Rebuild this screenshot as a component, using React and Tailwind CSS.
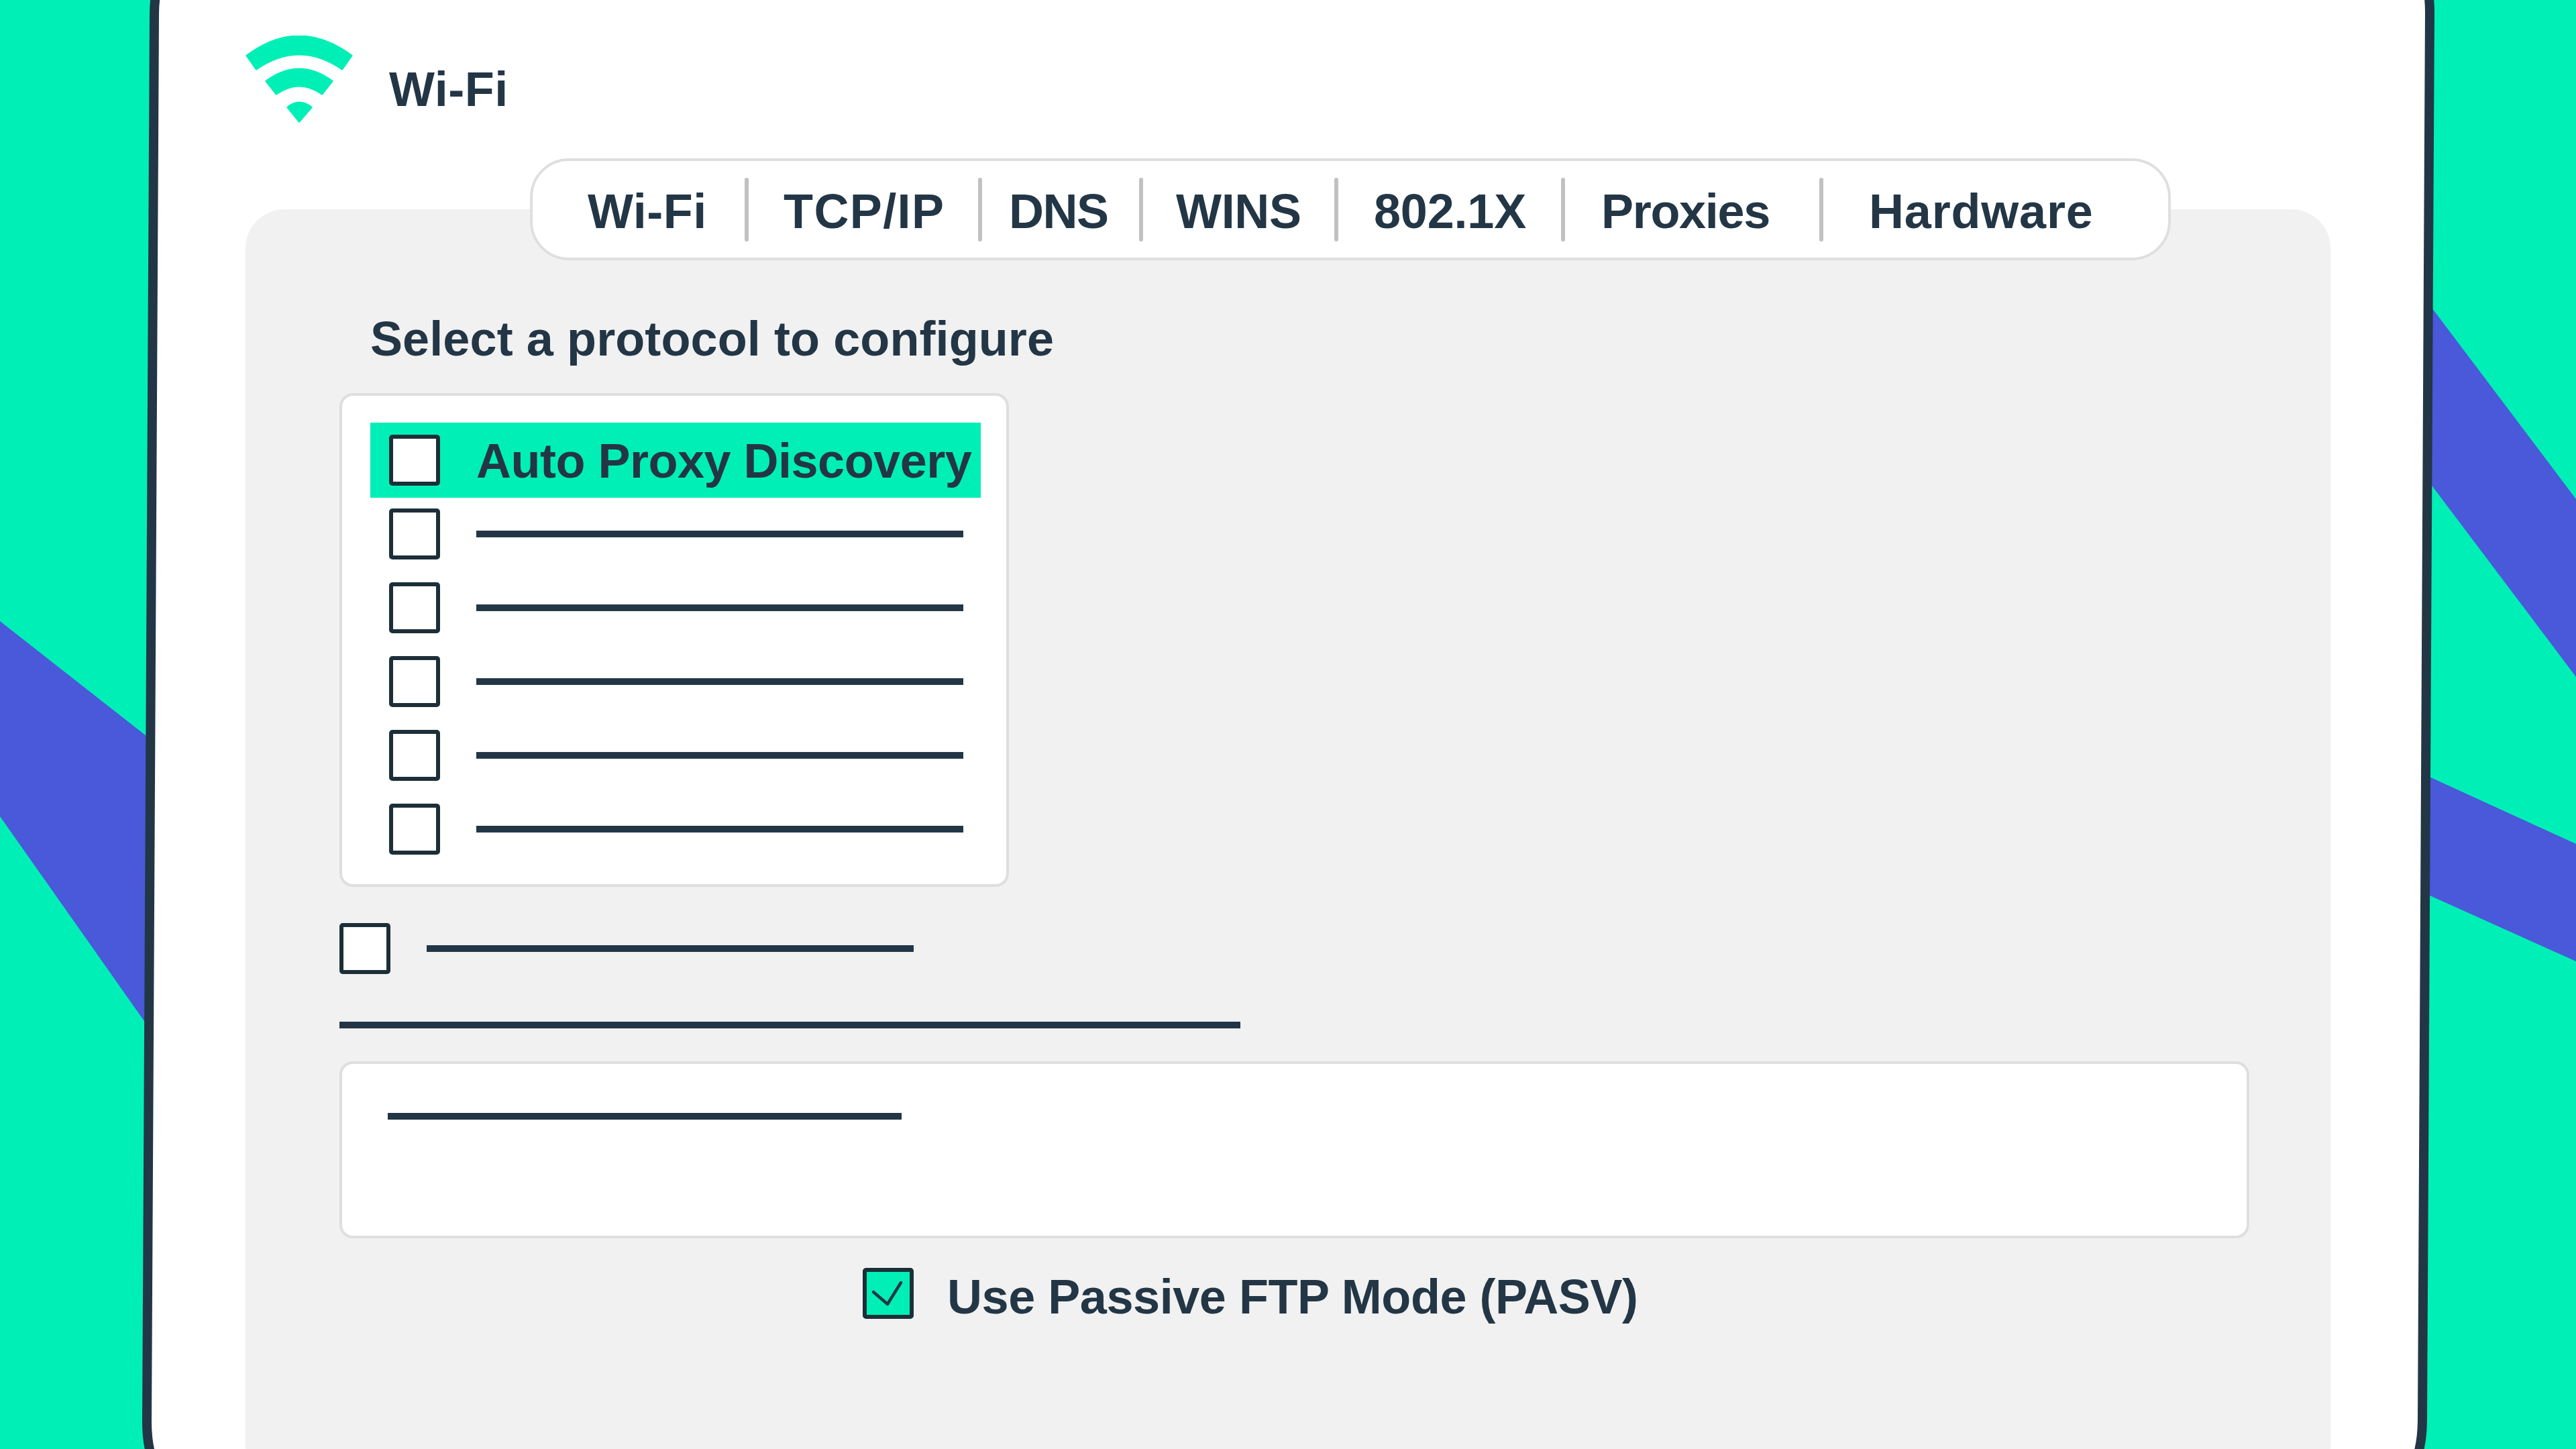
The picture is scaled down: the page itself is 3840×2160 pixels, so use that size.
const TABS = [
  { label: "Wi-Fi", cell: "w-[316px] pl-[82px] tracking-[0.5px]" },
  { label: "TCP/IP", cell: "w-[342px] pl-[52px] tracking-[1.4px]" },
  { label: "DNS", cell: "w-[234px] pl-[40px] tracking-[-1.5px]" },
  { label: "WINS", cell: "w-[285px] pl-[49px] tracking-[-0.3px]" },
  { label: "802.1X", cell: "w-[332px] pl-[53px] tracking-[-0.2px]" },
  { label: "Proxies", cell: "w-[379px] pl-[54px] tracking-[-1.3px]" },
  { label: "Hardware", cell: "w-[513px] pl-[68px] tracking-[0.8px]" },
];

function Backdrop() {
  return (
    <svg className="absolute inset-0" width="3840" height="2160" viewBox="0 0 3840 2160">
      <rect width="3840" height="2160" fill="#00efb6" />
      <polygon points="0,926 260,1130 260,1586 0,1217" fill="#4a58da" />
      <polygon points="3580,399 3840,744 3840,1009 3580,664" fill="#4a58da" />
      <polygon points="3580,1139 3840,1258 3840,1433 3580,1316" fill="#4a58da" />
      <path
        d="M342 -95 Q231 -95 230 20 L219 2117 Q218 2240 330 2240 L3500 2240 Q3610 2240 3611 2117 L3622 20 Q3623 -95 3510 -95 Z"
        fill="#ffffff"
        stroke="#233646"
        strokeWidth="14"
      />
    </svg>
  );
}

function WifiIcon() {
  return (
    <svg width="160" height="130" viewBox="0 0 160 130" className="shrink-0" fill="#00efb6" stroke="#00efb6" strokeWidth="3" strokeLinejoin="round">
      <path d="M2 30 Q80 -28 158 30 L144 50 Q80 6 16 50 Z" />
      <path d="M31 68 Q80 32 129 68 L114 87 Q80 63 46 87 Z" />
      <path d="M63 107 Q80 93 98 107 L80 128 Z" />
    </svg>
  );
}

function Checkbox({ checked = false }) {
  return (
    <div className={`h-[76px] w-[76px] shrink-0 rounded-[5px] border-[6px] border-[#1c2f38] ${checked ? "bg-[#00efb6]" : "bg-white"}`}>
      {checked ? (
        <svg width="64" height="64" viewBox="0 0 64 64" fill="none" stroke="#233646" strokeWidth="4.5" strokeLinecap="round" strokeLinejoin="round">
          <path d="M10 30 L31 48 L51 16" />
        </svg>
      ) : null}
    </div>
  );
}

function Rule({ className = "" }) {
  return <div className={`h-[10px] bg-[#233646] ${className}`} />;
}

function Tabs() {
  return (
    <div className="relative z-10 ml-[424px] flex h-[152px] w-[2446px] items-center rounded-[58px] border-4 border-[#dedfde] bg-white">
      {TABS.map((tab, i) => (
        <div key={tab.label} className="flex items-center">
          <div className={`pt-[6px] ${tab.cell}`}>{tab.label}</div>
          {i < TABS.length - 1 ? <div className="h-[95px] w-[6px] rounded-full bg-[#c0c1c0]" /> : null}
        </div>
      ))}
    </div>
  );
}

function ProtocolList() {
  return (
    <div className="h-[736px] w-[998px] rounded-[20px] border-4 border-[#dedfdc] bg-white px-[42px] pt-[40px]">
      <div className="mb-[-1px] flex h-[112px] w-[910px] items-center gap-[54px] bg-[#00efb6] pl-[28px]">
        <Checkbox />
        <span className="pt-[2px] tracking-[-0.5px] whitespace-nowrap">Auto Proxy Discovery</span>
      </div>
      {[0, 1, 2, 3, 4].map((i) => (
        <div key={i} className="flex h-[110px] items-center gap-[54px] pl-[28px]">
          <Checkbox />
          <Rule className="w-[726px]" />
        </div>
      ))}
    </div>
  );
}

export default function App() {
  return (
    <div className="relative h-[2160px] w-[3840px] overflow-hidden font-['Liberation_Sans'] text-[72px] leading-none font-bold text-[#233646]">
      <Backdrop />
      <div className="relative px-[366px]">
        <header className="flex h-[236px] items-start pt-[53px]">
          <WifiIcon />
          <h1 className="mt-[44px] ml-[54px] tracking-[0.5px]">Wi-Fi</h1>
        </header>
        <Tabs />
        <main className="mt-[-76px] h-[1900px] rounded-[58px] bg-[#f1f1f1] pt-[157px] pl-[140px]">
          <h2 className="ml-[46px] h-[72px] tracking-[0.1px]">Select a protocol to configure</h2>
          <div className="mt-[45px]">
            <ProtocolList />
          </div>
          <div className="mt-[54px] flex items-center gap-[54px]">
            <Checkbox />
            <Rule className="w-[726px]" />
          </div>
          <Rule className="mt-[71px] w-[1343px]" />
          <div className="mt-[49px] h-[264px] w-[2847px] rounded-[20px] border-4 border-[#dedfdc] bg-white pt-[73px] pl-[68px]">
            <Rule className="w-[766px]" />
          </div>
          <div className="mt-[44px] flex items-start gap-[50px] pl-[780px]">
            <Checkbox checked />
            <span className="mt-[7px] tracking-[-0.45px]">Use Passive FTP Mode (PASV)</span>
          </div>
        </main>
      </div>
    </div>
  );
}
